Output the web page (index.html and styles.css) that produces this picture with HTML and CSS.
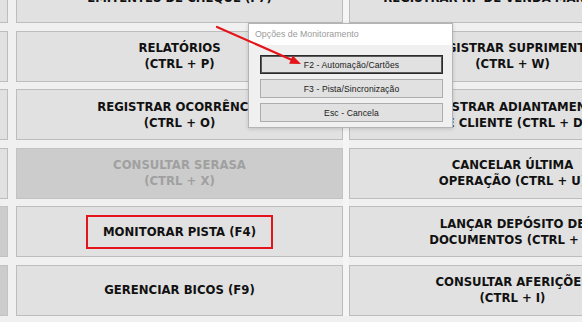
FILE: index.html
```html
<!DOCTYPE html>
<html>
<head>
  <meta charset="UTF-8">
  <title>Painel do Caixa</title>
  <link rel="stylesheet" href="styles.css">
</head>
<body>
  <div class="screen">
    <div class="board">
      <div class="panel panel-left">
        <div class="tile"></div>
        <div class="tile">EMITENTES DE CHEQUE (F7)</div>

        <div class="tile"></div>
        <div class="tile">RELATÓRIOS<br>(CTRL + P)</div>

        <div class="tile"></div>
        <div class="tile">REGISTRAR OCORRÊNCIA<br>(CTRL + O)</div>

        <div class="tile"></div>
        <div class="tile disabled">CONSULTAR SERASA<br>(CTRL + X)</div>

        <div class="tile disabled"></div>
        <div class="tile"><span class="highlight">MONITORAR PISTA (F4)</span></div>

        <div class="tile disabled"></div>
        <div class="tile">GERENCIAR BICOS (F9)</div>
      </div>

      <div class="split"><span class="split-line"></span></div>

      <div class="panel panel-right">
        <div class="tile">REGISTRAR NF DE VENDA MANUAL (F8)</div>
        <div class="tile">REGISTRAR SUPRIMENTO<br>(CTRL + W)</div>
        <div class="tile">REGISTRAR ADIANTAMENTO<br>DE CLIENTE (CTRL + D)</div>
        <div class="tile">CANCELAR ÚLTIMA<br>OPERAÇÃO (CTRL + U)</div>
        <div class="tile">LANÇAR DEPÓSITO DE<br>DOCUMENTOS (CTRL + L)</div>
        <div class="tile">CONSULTAR AFERIÇÕES<br>(CTRL + I)</div>
      </div>
    </div>

    <div class="dialog">
      <div class="dialog-title">Opções de Monitoramento</div>
      <div class="dialog-body">
        <button class="dlg-btn focused">F2 - Automação/Cartões</button>
        <button class="dlg-btn">F3 - Pista/Sincronização</button>
        <button class="dlg-btn">Esc - Cancela</button>
      </div>
    </div>

    <svg class="arrow" width="582" height="322" viewBox="0 0 582 322">
      <line x1="217" y1="27" x2="292" y2="60" stroke="#e3151b" stroke-width="2.2" stroke-linecap="round"/>
      <polygon points="301,64 289.1,63.7 292.7,55.5" fill="#e3151b"/>
    </svg>
  </div>
</body>
</html>
```

FILE: styles.css
```css
body {
  margin: 0;
  padding: 0;
  background-color: #f0f0f0;
  font-family: "DejaVu Sans", Verdana, sans-serif;
}

.screen {
  position: relative;
  width: 582px;
  height: 322px;
  overflow: hidden;
}

.board {
  display: flex;
  margin-left: -319px;
  margin-top: -28px;
}

.panel {
  display: grid;
  grid-auto-rows: 51px;
  row-gap: 7.6px;
}

.panel-left {
  grid-template-columns: 327px 327px;
  column-gap: 8px;
}

.panel-right {
  grid-template-columns: 327px;
}

.split {
  width: 15px;
  display: flex;
  justify-content: center;
}

.split-line {
  width: 6px;
  background-color: #f5f5f5;
}

.tile {
  box-sizing: border-box;
  display: flex;
  align-items: center;
  justify-content: center;
  text-align: center;
  background-color: #e1e1e1;
  border: 1px solid #bdbdbd;
  color: #111;
  font-weight: bold;
  font-size: 11.7px;
  line-height: 16px;
  white-space: nowrap;
}

.tile.disabled {
  background-color: #cccccc;
  border-color: #c2c2c2;
  color: #a0a0a0;
}

.highlight {
  border: 2px solid #e3151b;
  padding: 7px 15px;
}

.dialog {
  position: absolute;
  left: 248px;
  top: 23px;
  width: 205px;
  height: 105px;
  box-sizing: border-box;
  border: 1px solid #b4b4b4;
  background-color: #f0f0f0;
  box-shadow: 0 1px 4px rgba(0,0,0,0.15);
  font-family: "Liberation Sans", Arial, sans-serif;
}

.dialog-title {
  height: 21px;
  background-color: #fff;
  color: #9a9a9a;
  font-size: 8.8px;
  line-height: 21px;
  padding-left: 6px;
}

.dialog-body {
  display: flex;
  flex-direction: column;
  gap: 5px;
  padding: 10px 9px 0 11px;
}

.dlg-btn {
  height: 19px;
  box-sizing: border-box;
  padding: 0;
  background-color: #e1e1e1;
  border: 1px solid #adadad;
  color: #1a1a1a;
  font-family: "Liberation Sans", Arial, sans-serif;
  font-size: 8.6px;
  letter-spacing: 0.1px;
}

.dlg-btn.focused {
  border-color: #2b2b2b;
  box-shadow: inset 0 0 0 1px #5a5a5a;
}

.arrow {
  position: absolute;
  left: 0;
  top: 0;
  pointer-events: none;
}
```
